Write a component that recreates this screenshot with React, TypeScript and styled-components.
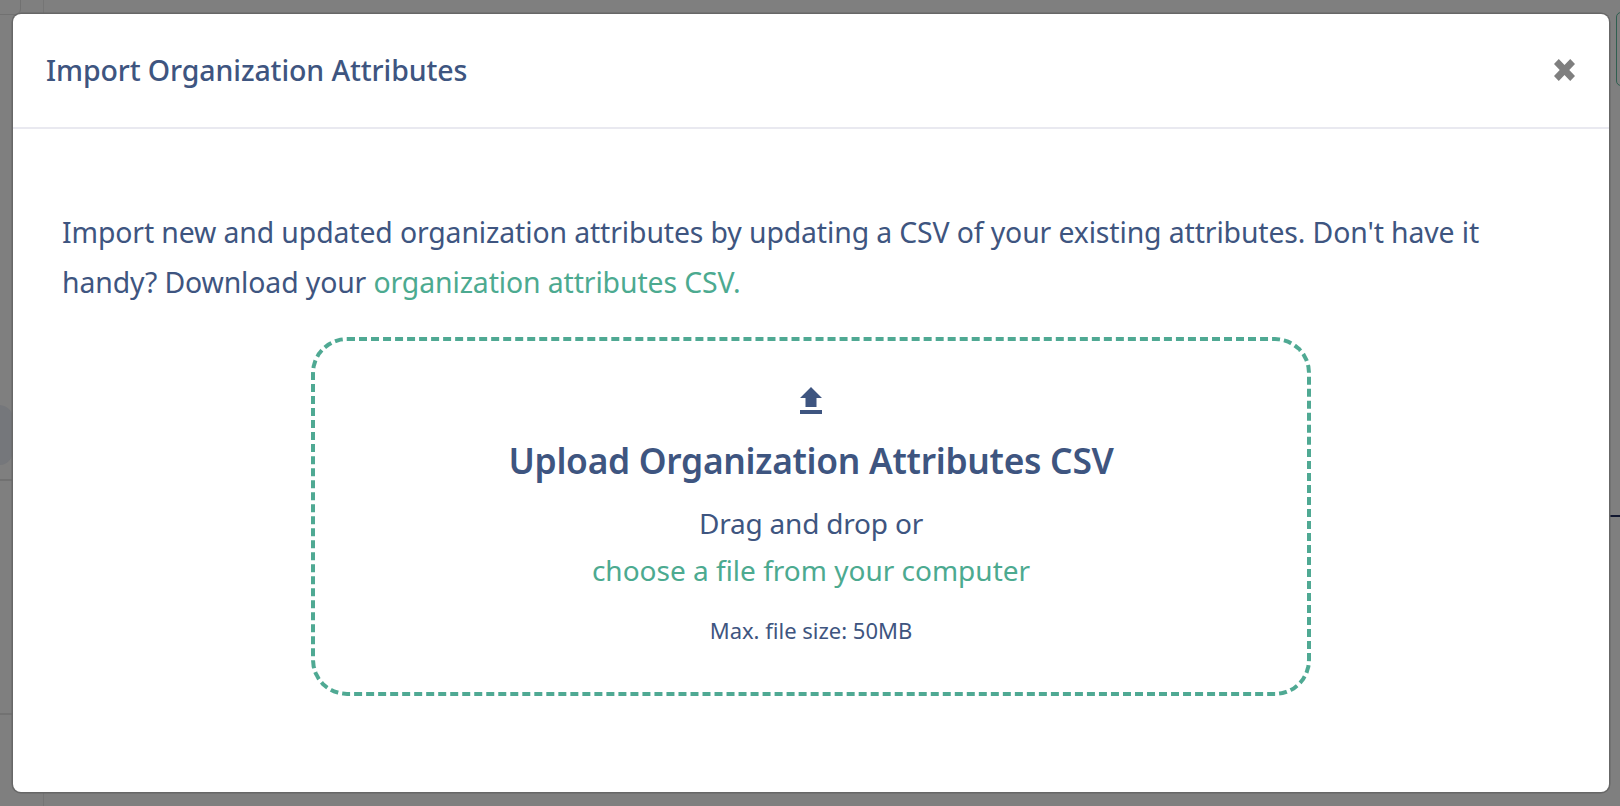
import React from 'react';
import styled, { createGlobalStyle } from 'styled-components';

const GlobalStyle = createGlobalStyle`
  html, body {
    margin: 0;
    padding: 0;
    height: 100%;
    overflow: hidden;
  }
  body {
    font-family: 'Noto Sans', 'Open Sans', sans-serif;
  }
`;

const Page = styled.div`
  position: relative;
  width: 1620px;
  height: 806px;
  box-sizing: border-box;
  padding: 14px 11px 14px 13px;
  background-color: #7f7f7f;
  overflow: hidden;
`;

const BackdropLine = styled.div<{ $css: string }>`
  position: absolute;
  ${({ $css }) => $css}
`;

const Dialog = styled.div`
  position: relative;
  height: 778px;
  display: flex;
  flex-direction: column;
  background-color: #fff;
  border-radius: 8px;
  box-shadow: 0 0 0 1.5px #676767;
`;

const Header = styled.div`
  height: 115px;
  flex: none;
  box-sizing: border-box;
  padding: 0 33px 2px;
  display: flex;
  align-items: center;
  justify-content: space-between;
  border-bottom: 2px solid #e9e9f0;
`;

const Title = styled.h2`
  margin: 0;
  font-size: 28.5px;
  font-weight: 500;
  letter-spacing: -0.1px;
  color: #3e5580;
`;

const CloseButton = styled.button`
  border: 0;
  padding: 0;
  background: none;
  display: flex;
  cursor: pointer;
  margin-right: 1px;
`;

const Body = styled.div`
  padding: 78px 49px 0;
`;

const Intro = styled.p`
  margin: 0;
  max-width: 1450px;
  font-size: 28.4px;
  line-height: 50px;
  letter-spacing: -0.12px;
  color: #3e5580;
`;

const Link = styled.a`
  color: #4caa90;
  text-decoration: none;
`;

const DropZone = styled.div`
  width: 1000px;
  height: 359px;
  margin: 30px auto 0;
  box-sizing: border-box;
  padding-top: 46px;
  border: 4px dashed #4fa993;
  border-radius: 36px;
  display: flex;
  flex-direction: column;
  align-items: center;
  color: #3e5580;
`;

const DropTitle = styled.div`
  margin-top: 23px;
  font-size: 35.4px;
  font-weight: 600;
  line-height: 46px;
  letter-spacing: -0.3px;
`;

const DropText = styled.div`
  margin-top: 17px;
  font-size: 28px;
  line-height: 47px;
  text-align: center;
`;

const DragLine = styled.span`
  letter-spacing: -0.2px;
`;

const DropHint = styled.div`
  margin-top: 23px;
  font-size: 22px;
  line-height: 26px;
`;

const App = () => {
  return (
    <Page>
      <GlobalStyle />
      <BackdropLine $css="left: -10px; top: -10px; width: 29px; height: 23px; border: 1px solid #717171; border-radius: 6px;" />
      <BackdropLine $css="left: 43px; top: 0; width: 1px; height: 14px; background: #757575;" />
      <BackdropLine $css="left: 43px; top: 792px; width: 1px; height: 14px; background: #757575;" />
      <BackdropLine $css="left: 0; top: 713px; width: 13px; height: 2px; background: #727272;" />
      <BackdropLine $css="left: 0; top: 479px; width: 13px; height: 2px; background: #717171;" />
      <BackdropLine $css="left: -20px; top: 405px; width: 33px; height: 60px; border-radius: 0 14px 14px 0; background: #75777b;" />
      <BackdropLine $css="right: -10px; top: 12px; width: 12px; height: 72px; border: 1px solid #2f5f50; border-radius: 5px;" />
      <BackdropLine $css="left: 1609px; top: 515px; width: 11px; height: 2px; background: #10162f;" />
      <Dialog>
        <Header>
          <Title>Import Organization Attributes</Title>
          <CloseButton aria-label="Close">
            <svg width="21" height="22" viewBox="0 0 22 22" preserveAspectRatio="none">
              <path d="M5 0 L11 6 L17 0 L22 5 L16 11 L22 17 L17 22 L11 16 L5 22 L0 17 L6 11 L0 5 Z" fill="#7f7f7f" />
            </svg>
          </CloseButton>
        </Header>
        <Body>
          <Intro>
            Import new and updated organization attributes by updating a CSV of your existing attributes. Don't have it handy? Download your <Link href="#">organization attributes CSV.</Link>
          </Intro>
          <DropZone>
            <svg width="22" height="27" viewBox="0 0 22 27">
              <path d="M11 0 L22 11 L16.5 11 L16.5 20 L5.5 20 L5.5 11 L0 11 Z M0 23 H22 V27 H0 Z" fill="#3e5580" />
            </svg>
            <DropTitle>Upload Organization Attributes CSV</DropTitle>
            <DropText>
              <DragLine>Drag and drop or</DragLine>
              <br />
              <Link href="#">choose a file from your computer</Link>
            </DropText>
            <DropHint>Max. file size: 50MB</DropHint>
          </DropZone>
        </Body>
      </Dialog>
    </Page>
  );
};

export default App;
